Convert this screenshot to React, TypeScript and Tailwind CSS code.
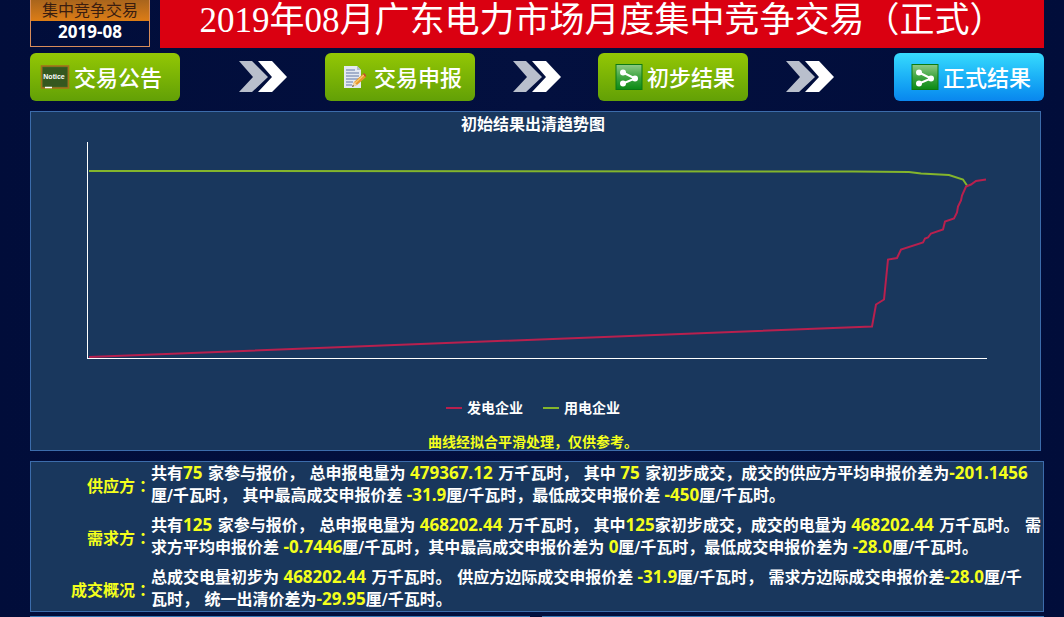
import React from 'react'
import clsx from 'clsx'

type Part = string | { value: string }

const v = (value: string): Part => ({ value })

const summary: { label: string; parts: Part[] }[] = [
  {
    label: '供应方：',
    parts: [
      '共有', v('75'), ' 家参与报价， 总申报电量为', v(' 479367.12'), ' 万千瓦时， 其中', v(' 75'),
      ' 家初步成交，成交的供应方平均申报价差为', v('-201.1456'), '\n厘/千瓦时， 其中最高成交申报价差',
      v(' -31.9'), '厘/千瓦时，最低成交申报价差', v(' -450'), '厘/千瓦时。',
    ],
  },
  {
    label: '需求方：',
    parts: [
      '共有', v('125'), ' 家参与报价， 总申报电量为', v(' 468202.44'), ' 万千瓦时， 其中', v('125'),
      '家初步成交，成交的电量为', v(' 468202.44'), ' 万千瓦时。 需\n求方平均申报价差', v(' -0.7446'),
      '厘/千瓦时，其中最高成交申报价差为', v(' 0'), '厘/千瓦时，最低成交申报价差为', v(' -28.0'), '厘/千瓦时。',
    ],
  },
  {
    label: '成交概况：',
    parts: [
      '总成交电量初步为', v(' 468202.44'), ' 万千瓦时。 供应方边际成交申报价差', v(' -31.9'),
      '厘/千瓦时， 需求方边际成交申报价差', v('-28.0'), '厘/千\n瓦时， 统一出清价差为', v('-29.95'), '厘/千瓦时。',
    ],
  },
]

function NoticeIcon() {
  return (
    <svg viewBox="0 0 30 26" className="h-[26px] w-[30px] shrink-0">
      <rect x="1.500" y="2" width="27" height="22" fill="#3f6a22" stroke="#a3701c" strokeWidth="1.600" />
      <rect x="3" y="3.500" width="24" height="19" fill="#35581f" />
      <text x="14" y="15" textAnchor="middle" fontSize="7" fontWeight="bold" fill="#fff" fontFamily="Liberation Sans, sans-serif">
        Notice
      </text>
      <path d="M5 23.500h7" stroke="#fff" strokeWidth="1.500" />
    </svg>
  )
}

function EditIcon() {
  return (
    <svg viewBox="0 0 24 26" className="h-[26px] w-6 shrink-0">
      <path d="M2 2h13l4 4v18H2z" fill="#e4e9f2" />
      <path d="M15 2v4h4z" fill="#b4bccd" />
      <path d="M4 6h9M4 9h13M4 12h13M4 15h12M4 18h7M4 21h6" stroke="#8d9dc0" strokeWidth="1.300" />
      <path d="M10 23l2-5 9-8 3 3-9 8z" fill="#e8962a" />
      <path d="M13 19l9-8" stroke="#f9c96a" strokeWidth="1.200" />
      <path d="M10 23l2-5 3 3z" fill="#f3d6a6" />
      <path d="M10 23l1-2 1 1z" fill="#333" />
      <path d="M21 10l1.200-1 2 2.500-.8 1.500z" fill="#c9472f" />
    </svg>
  )
}

function ShareIcon() {
  return (
    <svg viewBox="0 0 28 26" className="h-[26px] w-7 shrink-0">
      <defs>
        <linearGradient id="share" x1="0" y1="0" x2="0" y2="1">
          <stop offset="0" stopColor="#8fca86" />
          <stop offset="0.5" stopColor="#3fa541" />
          <stop offset="1" stopColor="#0b8a14" />
        </linearGradient>
      </defs>
      <rect x="1" y="0.500" width="26" height="25" fill="url(#share)" stroke="#0d7a12" />
      <path d="M8 8.500l12 6-12 5" fill="none" stroke="#fff" strokeWidth="2" />
      <circle cx="8" cy="8.500" r="3" fill="#fff" />
      <circle cx="20" cy="14.500" r="3" fill="#fff" />
      <circle cx="8" cy="19.500" r="3" fill="#fff" />
    </svg>
  )
}

function Arrows() {
  return (
    <svg viewBox="0 0 48 34" className="h-[34px] w-12 shrink-0">
      <path d="M0 1h13l16 16-16 15H0l14-15z" fill="#b9bfcc" />
      <path d="M19 1h14l15 16-15 15H19l14-15z" fill="#fff" />
    </svg>
  )
}

function Step({ icon, label, className }: { icon: React.ReactNode; label: string; className: string }) {
  return (
    <button
      type="button"
      className={clsx(
        'flex h-12 items-center rounded-md bg-linear-to-b text-[22px] font-medium whitespace-nowrap text-white',
        className
      )}
    >
      {icon}
      {label}
    </button>
  )
}

function TrendChart() {
  return (
    <svg viewBox="0 0 1004 220" className="mt-1 w-full">
      <path d="M56.500 1.500v217h899.500" fill="none" stroke="#fff" strokeWidth="1" shapeRendering="crispEdges" />
      <path
        d="M58 31L822 31.500 878 32 890 33.500 918 35 932 39.500 936 45.500"
        fill="none" stroke="#84b52c" strokeWidth="2"
      />
      <path
        d="M58 217L841 186.500 845 164.500 853 159.500 857 119.500 866 118 870 109.500 892 102.500 894 98.500 897 97.500 900 93.500 912 89.500 914 81.500 923 78.500 926 72.500 927 66.500 930 60.500 931 55.500 935 46.500 940 44.500 945 41 955 39.500"
        fill="none" stroke="#b8204e" strokeWidth="2"
      />
    </svg>
  )
}

function App() {
  return (
    <div className="min-h-screen overflow-hidden bg-linear-to-r from-[#010d3a] via-[#03103f] to-[#010d3a] pr-5 pl-[30px] font-['Open_Sans','Noto_Sans_CJK_SC',sans-serif] text-white" lang="zh-CN">
      <header className="flex gap-[10px]">
        <div className="h-[47px] w-[120px] shrink-0 border border-t-0 border-[#d78c5a] text-center">
          <div className="h-[21px] bg-linear-to-b from-[#a9651c] to-[#dd7d15] text-base leading-[21px] text-[#3a1d10]">
            集中竞争交易
          </div>
          <div className="text-[17px] leading-[21px] font-bold">2019-08</div>
        </div>
        <h1 className="h-12 flex-1 bg-[#da0011] text-center font-['Liberation_Serif','Noto_Sans_CJK_SC',serif] text-[35px] leading-[42px] whitespace-nowrap">
          2019年08月广东电力市场月度集中竞争交易（正式）
        </h1>
      </header>

      <nav className="mt-[5px] grid grid-cols-[150fr_145fr_150fr_123fr_150fr_146fr_150fr] items-center">
        <Step icon={<NoticeIcon />} label="交易公告" className="gap-1 from-[#93c704] to-[#62a006] pl-[10px]" />
        <div className="flex justify-end px-[38px]"><Arrows /></div>
        <Step icon={<EditIcon />} label="交易申报" className="justify-end gap-2 from-[#93c704] to-[#62a006] pr-[13px]" />
        <div className="flex justify-center"><Arrows /></div>
        <Step icon={<ShareIcon />} label="初步结果" className="justify-end gap-1 from-[#93c704] to-[#62a006] pr-[13px]" />
        <div className="flex px-[38px]"><Arrows /></div>
        <Step icon={<ShareIcon />} label="正式结果" className="justify-end gap-1 from-[#37dbfd] to-[#0a86ee] pr-[13px]" />
      </nav>

      <section className="mt-[10px] mr-[3px] h-[340px] border border-[#3c6cab] bg-[#19375d] pr-[5px] text-center font-bold">
        <h2 className="text-base leading-6">初始结果出清趋势图</h2>
        <TrendChart />
        <div className="mt-[38px] flex justify-center gap-5 text-sm leading-5">
          <span className="flex items-center gap-[5px]">
            <i className="h-[2px] w-4 bg-[#b8204e]" />
            发电企业
          </span>
          <span className="flex items-center gap-[5px]">
            <i className="h-[2px] w-4 bg-[#84b52c]" />
            用电企业
          </span>
        </div>
        <p className="mt-[14px] text-sm leading-5 text-[#f4ff1c]">曲线经拟合平滑处理，仅供参考。</p>
      </section>

      <dl className="mt-[10px] flex flex-col gap-2 border border-[#3c6cab] bg-[#19375d] pt-px text-base leading-[22px] font-bold">
        {summary.map((row) => (
          <div key={row.label} className="flex items-center">
            <dt className="w-[120px] shrink-0 text-right font-['Noto_Sans_CJK_TC',sans-serif] text-[#f4ff1c]" lang="zh-TW">{row.label}</dt>
            <dd className="flex-1 font-['DejaVu_Sans','Noto_Sans_CJK_SC',sans-serif] whitespace-pre-line">
              {row.parts.map((part, i) =>
                typeof part === 'string' ? part : (
                  <span key={i} className="font-['Open_Sans',sans-serif] text-[17px] leading-none text-[#f4ff1c]">{part.value}</span>
                )
              )}
            </dd>
          </div>
        ))}
      </dl>

      <div className="mt-[4px] grid grid-cols-[500fr_502fr] gap-3">
        <div className="h-[3px] bg-[#3577b5]" />
        <div className="h-[3px] bg-[#3577b5]" />
      </div>
    </div>
  )
}

export default App
